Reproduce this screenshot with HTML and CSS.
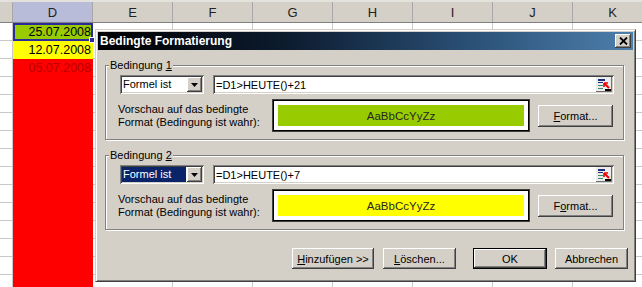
FILE: index.html
```html
<!DOCTYPE html>
<html lang="de">
<head>
<meta charset="utf-8">
<title>Bedingte Formatierung</title>
<link rel="stylesheet" href="styles.css">
</head>
<body>
<div class="sheet">
  <div class="head">
    <div class="h h-c"></div>
    <div class="h h-d">D</div>
    <div class="h">E</div>
    <div class="h">F</div>
    <div class="h">G</div>
    <div class="h">H</div>
    <div class="h">I</div>
    <div class="h">J</div>
    <div class="h">K</div>
  </div>
  <div class="body">
    <div class="col col-c"></div>
    <div class="col col-d">
      <div class="cell green active">25.07.2008<span class="handle"></span></div>
      <div class="cell yellow">12.07.2008</div>
      <div class="cell red">05.07.2008</div>
      <div class="fill"></div>
    </div>
    <div class="col"></div>
    <div class="col"></div>
    <div class="col"></div>
    <div class="col"></div>
    <div class="col"></div>
    <div class="col"></div>
    <div class="col"></div>
  </div>
</div>

<div class="dialog">
  <div class="titlebar">
    <span class="title">Bedingte Formatierung</span>
    <span class="close"><svg width="9" height="8" viewBox="0 0 9 8"><path d="M1 0.5 L8 7.5 M8 0.5 L1 7.5" stroke="#000" stroke-width="1.8"/></svg></span>
  </div>
  <div class="content">
    <fieldset class="group">
      <legend>Bedingung <u>1</u></legend>
      <div class="cond-row">
        <div class="select"><span class="sel-text">Formel ist</span><span class="dd"><svg width="7" height="4" viewBox="0 0 7 4"><polygon points="0,0 7,0 3.5,4" fill="#000"/></svg></span></div>
        <div class="input"><span>=D1&gt;HEUTE()+21</span>
          <svg class="picker" width="16" height="15" viewBox="0 0 16 15"><rect width="16" height="15" fill="#ececec"/><rect x="2" y="2" width="7" height="2" fill="#1c2c7c"/><rect x="2" y="5" width="5" height="1" fill="#1c2c7c"/><rect x="2" y="8" width="5" height="1" fill="#3a8a6a"/><rect x="2" y="11" width="5" height="1" fill="#3a8a6a"/><path d="M13 11 L8.5 6.5" stroke="#e00" stroke-width="2"/><path d="M8 6 h4 M8 6 v4" stroke="#e00" stroke-width="1.6"/><rect x="9" y="12" width="6" height="2" fill="#000"/><path d="M15.5 0 V14.5 H0" fill="none" stroke="#707070"/></svg>
        </div>
      </div>
      <div class="preview-row">
        <div class="preview-label">Vorschau auf das bedingte<br>Format (Bedingung ist wahr):</div>
        <div class="preview"><div class="swatch sw-green">AaBbCcYyZz</div></div>
        <div class="btn btn-format"><u>F</u>ormat...</div>
      </div>
    </fieldset>

    <fieldset class="group group-2">
      <legend>Bedingung <u>2</u></legend>
      <div class="cond-row">
        <div class="select"><span class="sel-text focused">Formel ist</span><span class="dd"><svg width="7" height="4" viewBox="0 0 7 4"><polygon points="0,0 7,0 3.5,4" fill="#000"/></svg></span></div>
        <div class="input"><span>=D1&gt;HEUTE()+7</span>
          <svg class="picker" width="16" height="15" viewBox="0 0 16 15"><rect width="16" height="15" fill="#ececec"/><rect x="2" y="2" width="7" height="2" fill="#1c2c7c"/><rect x="2" y="5" width="5" height="1" fill="#1c2c7c"/><rect x="2" y="8" width="5" height="1" fill="#3a8a6a"/><rect x="2" y="11" width="5" height="1" fill="#3a8a6a"/><path d="M13 11 L8.5 6.5" stroke="#e00" stroke-width="2"/><path d="M8 6 h4 M8 6 v4" stroke="#e00" stroke-width="1.6"/><rect x="9" y="12" width="6" height="2" fill="#000"/><path d="M15.5 0 V14.5 H0" fill="none" stroke="#707070"/></svg>
        </div>
      </div>
      <div class="preview-row">
        <div class="preview-label">Vorschau auf das bedingte<br>Format (Bedingung ist wahr):</div>
        <div class="preview"><div class="swatch sw-yellow">AaBbCcYyZz</div></div>
        <div class="btn btn-format">F<u>o</u>rmat...</div>
      </div>
    </fieldset>

    <div class="buttons">
      <div class="btn btn-add"><u>H</u>inzufügen &gt;&gt;</div>
      <div class="btn btn-del"><u>L</u>öschen...</div>
      <div class="btn btn-ok">OK</div>
      <div class="btn btn-cancel">Abbrechen</div>
    </div>
  </div>
</div>
</body>
</html>
```

FILE: styles.css
```css
* { box-sizing: border-box; }
html, body { margin: 0; padding: 0; }
body {
  width: 642px;
  height: 287px;
  overflow: hidden;
  background: #fff;
  font-family: "Liberation Sans", Arial, sans-serif;
  position: relative;
}

/* spreadsheet */
.sheet { display: flex; flex-direction: column; width: 642px; overflow: hidden; }
.head {
  display: flex;
  height: 23px;
  background: #d4d0c8;
  border-bottom: 1px solid #808080;
  border-top: 2px solid #e4e2dc;
}
.h {
  flex: none;
  width: 80px;
  border-right: 1px solid #a8a8a8;
  display: flex;
  align-items: center;
  justify-content: center;
  font-size: 13px;
  color: #222;
}
.h-c { width: 13px; }
.h-d { background: #b8bcd9; }

.body { display: flex; height: 264px; }
.col {
  flex: none;
  width: 80px;
  border-right: 1px solid #c8c8c8;
  background: repeating-linear-gradient(to bottom, #fff 0 17px, #c8c8c8 17px 18px);
}
.col-c { width: 13px; }
.col-d {
  display: flex;
  flex-direction: column;
  background: #ff0000;
  border-right: none;
}
.cell {
  height: 18px;
  font-size: 12.5px;
  line-height: 18px;
  text-align: right;
  padding-right: 2px;
  color: #000;
}
.green { background: #99cc00; }
.yellow { background: #ffff00; }
.red { background: #ff0000; color: #b80000; }
.active {
  position: relative;
  border: 2px solid #2b2b9b;
  line-height: 14px;
  padding-right: 0;
}
.handle {
  position: absolute;
  right: -4px;
  bottom: -4px;
  width: 6px;
  height: 6px;
  background: #2b2b9b;
  border: 1px solid #fff;
}
.fill { flex: 1; }

/* dialog */
.dialog {
  position: absolute;
  left: 95px;
  top: 29px;
  width: 541px;
  height: 253px;
  background: #d4d0c8;
  border: 1px solid;
  border-color: #d4d0c8 #404040 #404040 #d4d0c8;
  box-shadow: inset 1px 1px #fff, inset -1px -1px #808080;
  padding: 2px;
  display: flex;
  flex-direction: column;
  font-size: 11px;
  color: #000;
}
.titlebar {
  flex: none;
  height: 18px;
  display: flex;
  align-items: center;
  justify-content: space-between;
  padding: 0 2px 0 2px;
  background: linear-gradient(to right, #000 0%, #0c1b2e 35%, #2b5177 70%, #4d7fac 100%);
  color: #fff;
}
.title { font-weight: bold; font-size: 12px; }
.close {
  width: 16px;
  height: 14px;
  background: #d4d0c8;
  box-shadow: inset -1px -1px #404040, inset 1px 1px #fff, inset -2px -2px #808080;
  display: flex;
  align-items: center;
  justify-content: center;
}

.content {
  flex: 1;
  display: flex;
  flex-direction: column;
  padding: 9px 9px 0 7px;
}
.group {
  margin: 0;
  min-width: 0;
  border: 1px solid #808080;
  box-shadow: inset 1px 1px #fff, 1px 1px #fff;
  padding: 3px 9px 7px 3px;
}
.group-2 { margin-top: 9px; }
legend {
  padding: 0 1px;
  font-size: 11px;
  line-height: 13px;
  background: #d4d0c8;
}

.cond-row {
  display: flex;
  align-items: center;
  gap: 9px;
  margin-left: 11px;
  height: 19px;
}
.sunken {
  background: #fff;
}
.select, .input {
  height: 19px;
  background: #fff;
  box-shadow: inset 1px 1px #808080, inset -1px -1px #fff, inset 2px 2px #404040, inset -2px -2px #d4d0c8;
  display: flex;
  align-items: center;
  padding: 2px;
}
.select { width: 84px; flex: none; }
.sel-text {
  flex: 1;
  height: 15px;
  line-height: 15px;
  padding-left: 1px;
  margin-right: 1px;
}
.focused { background: #0a246a; color: #fff; }
.dd {
  flex: none;
  width: 15px;
  height: 15px;
  background: #d4d0c8;
  box-shadow: inset -1px -1px #404040, inset 1px 1px #fff, inset -2px -2px #808080;
  display: flex;
  align-items: center;
  justify-content: center;
}
.input {
  flex: 1;
  justify-content: space-between;
  padding: 2px 2px 2px 3px;
}
.picker { flex: none; }

.preview-row {
  display: flex;
  align-items: center;
  margin-top: 5px;
  margin-left: 9px;
}
.preview-label { width: 154px; flex: none; line-height: 13px; }
.preview {
  width: 258px;
  height: 33px;
  flex: none;
  border: 1px solid #404040;
  box-shadow: inset 0 0 0 1px #000;
  background: #fff;
  padding: 5px;
}
.swatch {
  height: 100%;
  display: flex;
  align-items: center;
  justify-content: center;
  font-size: 11.5px;
  color: #262626;
}
.sw-green { background: #99cc00; }
.sw-yellow { background: #ffff00; }

.btn {
  flex: none;
  height: 21px;
  background: #d4d0c8;
  box-shadow: inset -1px -1px #404040, inset 1px 1px #fff, inset -2px -2px #808080;
  display: flex;
  align-items: center;
  justify-content: center;
  font-size: 11px;
}
.btn-format { width: 75px; height: 22px; margin-left: 8px; }

.buttons {
  display: flex;
  justify-content: flex-end;
  margin-top: 18px;
  margin-right: -4px;
}
.btn-add { width: 82px; }
.btn-del { width: 73px; margin-left: 9px; }
.btn-ok {
  width: 74px;
  margin-left: 17px;
  box-shadow: inset 0 0 0 1px #000, inset -2px -2px #404040, inset 2px 2px #fff, inset -3px -3px #808080;
}
.btn-cancel { width: 73px; margin-left: 8px; }
```
